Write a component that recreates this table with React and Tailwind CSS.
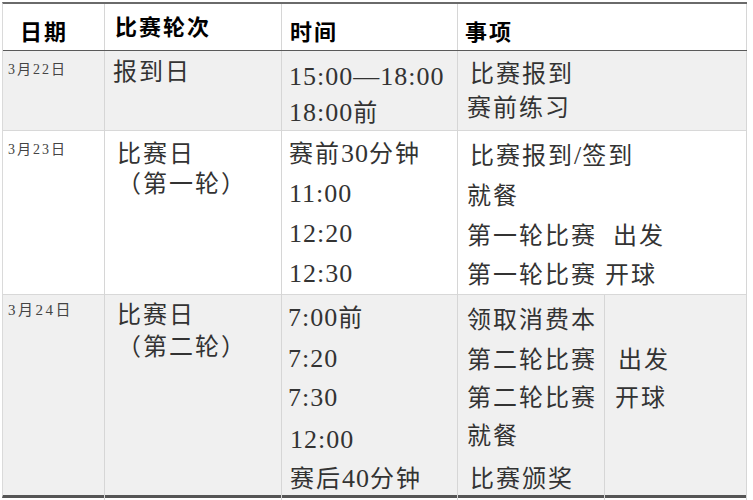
import React from 'react';

// Match schedule table (3/22 - 3/24)
const FONT = { fontFamily: '"Liberation Serif", "Noto Sans CJK SC", serif' };

// digits in the original are tall half-width serif glyphs, so give them a bit more size
const Mixed = ({ text }) =>
    text.split(/([0-9:—/]+)/).map((part, i) =>
        /[0-9:—/]/.test(part)
            ? <span key={i} className="text-[26px] tracking-[1px]">{part}</span>
            : <span key={i}>{part}</span>
    );

const Line = ({ h, className = '', children }) => (
    <div className={`whitespace-pre ${className}`} style={{ height: h, lineHeight: `${h}px` }}>
        <Mixed text={children} />
    </div>
);

const App = () => {
    const cell = 'border-r border-[#d6d6d6]';
    const body = 'text-[24px] tracking-[2px] text-[#333]';

    return (
        <div className="w-[753px] h-[500px] bg-white overflow-hidden" style={FONT}>
            <div className="ml-[2px] mt-[2px] w-[745px] border-t-2 border-b-[3px] border-t-[#6a6a6a] border-b-[#555] border-l border-l-[#dadada]">

                {/* header */}
                <div className="grid grid-cols-[102px_177px_176px_289px] h-[47px] border-b border-[#5a5a5a] bg-white text-black font-bold text-[22px] tracking-[2px]" style={{ fontFamily: '"Noto Sans CJK SC", sans-serif' }}>
                    <div className={`${cell} pl-[17px] pt-[6px] leading-[40px]`}>日期</div>
                    <div className={`${cell} pl-[10px] pt-[1px] leading-[40px]`}>比赛轮次</div>
                    <div className={`${cell} pl-[8px] pt-[6px] leading-[40px]`}>时间</div>
                    <div className={`${cell} pl-[7px] pt-[6px] leading-[40px]`}>事项</div>
                </div>

                {/* 3月22日 */}
                <div className="grid grid-cols-[102px_177px_176px_289px] h-[80px] border-b border-[#d8d8d8] bg-[#f0f0f0]">
                    <div className={`${cell} pl-[5px] pt-[10px] text-[14px] tracking-[2px] leading-[18px] text-[#444]`}>3月22日</div>
                    <div className={`${cell} pl-[8px] pt-[6px] ${body}`}>
                        <Line h={30}>报到日</Line>
                    </div>
                    <div className={`${cell} pl-[7px] pt-[8px] ${body}`}>
                        <Line h={36}>15:00—18:00</Line>
                        <Line h={36}>18:00前</Line>
                    </div>
                    <div className={`${cell} pl-[9px] pt-[6px] ${body}`}>
                        <Line h={34} className="ml-[3px]">比赛报到</Line>
                        <Line h={34}>赛前练习</Line>
                    </div>
                </div>

                {/* 3月23日 */}
                <div className="grid grid-cols-[102px_177px_176px_289px] h-[164px] border-b border-[#d8d8d8] bg-white">
                    <div className={`${cell} pl-[5px] pt-[10px] text-[14px] tracking-[2px] leading-[18px] text-[#444]`}>3月23日</div>
                    <div className={`${cell} pl-[12px] pt-[8px] ${body}`}>
                        <Line h={30}>比赛日</Line>
                        <Line h={30}>（第一轮）</Line>
                    </div>
                    <div className={`${cell} pl-[7px] pt-[3px] ${body}`}>
                        <Line h={40}>赛前30分钟</Line>
                        <Line h={40}>11:00</Line>
                        <Line h={40}>12:20</Line>
                        <Line h={40}>12:30</Line>
                    </div>
                    <div className={`${cell} pl-[9px] pt-[4px] ${body}`}>
                        <Line h={41} className="ml-[3px]">比赛报到/签到</Line>
                        <Line h={40}>就餐</Line>
                        <Line h={40}>{'第一轮比赛\u00a0\u00a0出发'}</Line>
                        <Line h={39}>{'第一轮比赛\u00a0开球'}</Line>
                    </div>
                </div>

                {/* 3月24日 */}
                <div className="grid grid-cols-[102px_177px_176px_147px_142px] h-[200px] bg-[#f0f0f0]">
                    <div className={`${cell} pl-[5px] pt-[6px] text-[15px] tracking-[2.5px] leading-[18px] text-[#444]`}>3月24日</div>
                    <div className={`${cell} pl-[12px] pt-[4px] ${body}`}>
                        <Line h={32}>比赛日</Line>
                        <Line h={32}>（第二轮）</Line>
                    </div>
                    <div className={`${cell} pl-[6px] pt-[3px] ${body}`}>
                        <Line h={40}>7:00前</Line>
                        <Line h={42}>7:20</Line>
                        <Line h={36}>7:30</Line>
                        <Line h={48} className="ml-[2px]">12:00</Line>
                        <Line h={30} className="ml-[2px]">赛后40分钟</Line>
                    </div>
                    <div className={`${cell} pl-[9px] pt-[5px] ${body}`}>
                        <Line h={40}>领取消费本</Line>
                        <Line h={40}>第二轮比赛</Line>
                        <Line h={36}>第二轮比赛</Line>
                        <Line h={40}>就餐</Line>
                        <Line h={46} className="ml-[3px]">比赛颁奖</Line>
                    </div>
                    <div className={`${cell} pl-[10px] pt-[45px] ${body}`}>
                        <Line h={40} className="ml-[3px]">出发</Line>
                        <Line h={36}>开球</Line>
                    </div>
                </div>
            </div>
        </div>
    );
};

export default App;
